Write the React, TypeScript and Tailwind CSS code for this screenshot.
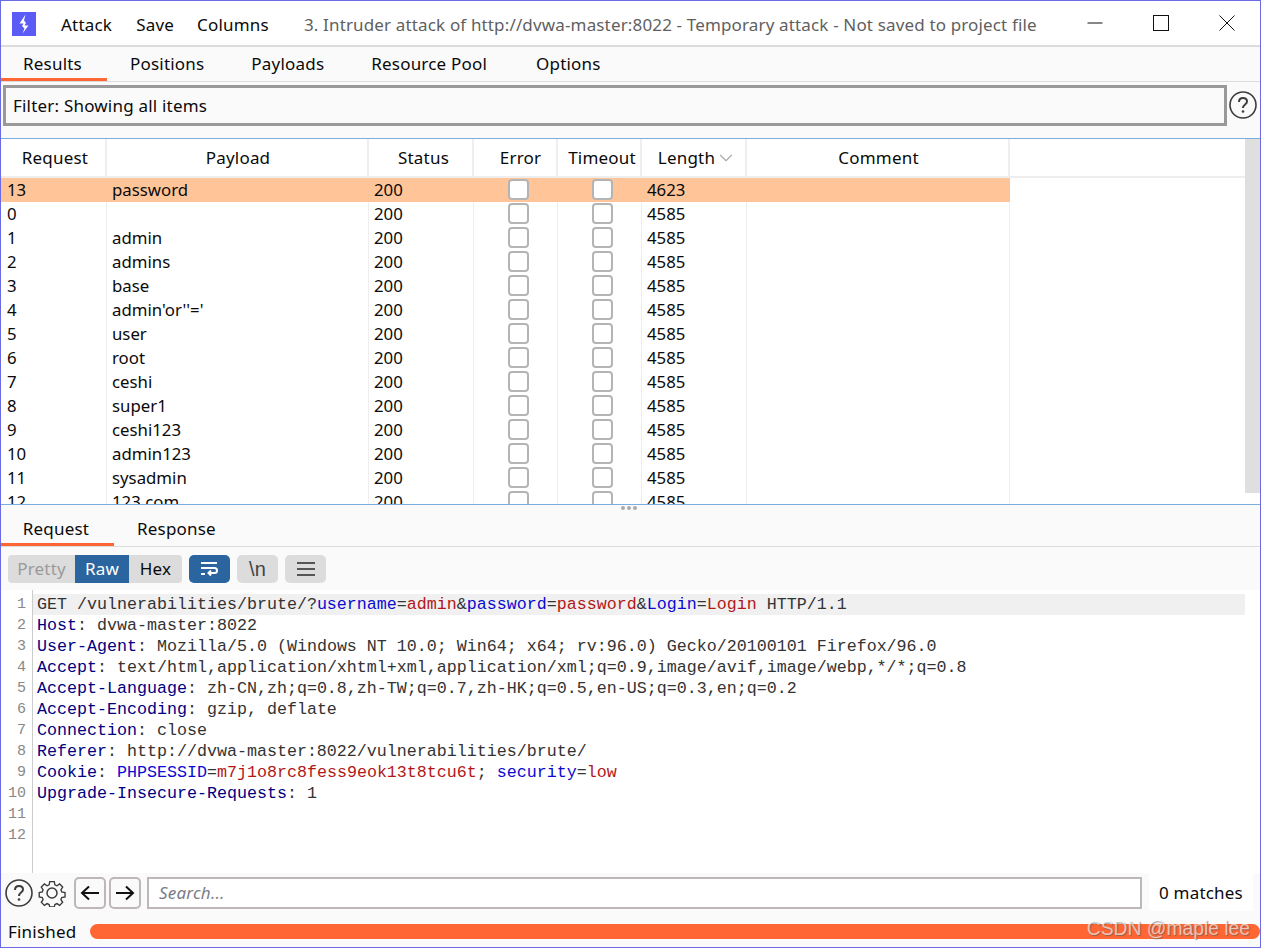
import { ChevronDown } from "lucide-react"

const rows = [
  ["13", "password", "4623"],
  ["0", "", "4585"],
  ["1", "admin", "4585"],
  ["2", "admins", "4585"],
  ["3", "base", "4585"],
  ["4", "admin'or''='", "4585"],
  ["5", "user", "4585"],
  ["6", "root", "4585"],
  ["7", "ceshi", "4585"],
  ["8", "super1", "4585"],
  ["9", "ceshi123", "4585"],
  ["10", "admin123", "4585"],
  ["11", "sysadmin", "4585"],
  ["12", "123.com", "4585"],
]

const Name = ({ children }: { children: string }) => <span className="text-[#000080]">{children}</span>
const Param = ({ children }: { children: string }) => <span className="text-[#0a0ad0]">{children}</span>
const Val = ({ children }: { children: string }) => <span className="text-[#b01818]">{children}</span>

const codeLines = [
  <>
    GET /vulnerabilities/brute/?<Param>username</Param>=<Val>admin</Val>&amp;<Param>password</Param>=<Val>password</Val>&amp;<Param>Login</Param>=<Val>Login</Val> HTTP/1.1
  </>,
  <><Name>Host</Name>: dvwa-master:8022</>,
  <><Name>User-Agent</Name>: Mozilla/5.0 (Windows NT 10.0; Win64; x64; rv:96.0) Gecko/20100101 Firefox/96.0</>,
  <><Name>Accept</Name>: text/html,application/xhtml+xml,application/xml;q=0.9,image/avif,image/webp,*/*;q=0.8</>,
  <><Name>Accept-Language</Name>: zh-CN,zh;q=0.8,zh-TW;q=0.7,zh-HK;q=0.5,en-US;q=0.3,en;q=0.2</>,
  <><Name>Accept-Encoding</Name>: gzip, deflate</>,
  <><Name>Connection</Name>: close</>,
  <><Name>Referer</Name>: http://dvwa-master:8022/vulnerabilities/brute/</>,
  <><Name>Cookie</Name>: <Param>PHPSESSID</Param>=<Val>m7j1o8rc8fess9eok13t8tcu6t</Val>; <Param>security</Param>=<Val>low</Val></>,
  <><Name>Upgrade-Insecure-Requests</Name>: 1</>,
  <></>,
  <></>,
]

function HelpIcon() {
  return (
    <svg width="28" height="28" viewBox="0 0 28 28" fill="none" stroke="#3c3c3c">
      <circle cx="14" cy="14" r="13" strokeWidth="1.6" />
      <path d="M10 11c0-2.6 1.8-4 4-4s4 1.400 4 3.600c0 3-4 3-4 6.400" strokeWidth="2" />
      <circle cx="14" cy="20.500" r="1.300" fill="#3c3c3c" stroke="none" />
    </svg>
  )
}

function GearIcon() {
  return (
    <svg width="28" height="28" viewBox="0 0 28 28" fill="none" stroke="#3c3c3c" strokeWidth="1.500">
      <path d="M11.500 1.500h5l.7 3.600 2.300 1 3-2 3.400 3.500-2 3 .9 2.300 3.700.7v4.800l-3.700.7-.9 2.300 2 3-3.400 3.500-3-2-2.300 1-.7 2.800h-5l-.7-2.800-2.300-1-3 2-3.400-3.500 2-3-.9-2.300-3.400-.7v-4.800l3.400-.7.9-2.300-2-3 3.400-3.500 3 2 2.300-1z" transform="translate(1.400 1.300) scale(.9)" />
      <circle cx="14" cy="14" r="5" />
    </svg>
  )
}

function NavArrow({ flip }: { flip?: boolean }) {
  return (
    <svg width="20" height="16" viewBox="0 0 20 16" fill="none" stroke="#111" strokeWidth="2" className={flip ? "rotate-180" : ""}>
      <path d="M19 8H2M9 1.500 2 8l7 6.500" />
    </svg>
  )
}

function Check() {
  return <div className="w-[21px] h-[21px] mb-[2px] rounded-[4px] border-2 border-[#b4b4b4] bg-white" />
}

export default function App() {
  return (
    <div className="relative w-[1261px] h-[948px] flex flex-col overflow-hidden bg-[#fafafa] border border-[#6a6ae4] text-[#0a0a0a] font-['Noto_Sans','Open_Sans',sans-serif] text-[17px] tracking-[0.2px]">
      {/* title bar */}
      <div className="h-[46px] shrink-0 flex items-center bg-white border-b-2 border-[#dcdcdc]">
        <div className="ml-[11px] mt-[2px] w-6 h-6 bg-[#5b5bf6] flex items-center justify-center">
          <svg width="12" height="20" viewBox="0 0 12 20" fill="white">
            <path d="M7.500 0.500 1.500 9.500h4l-1.500 2.500 2.500 2.500-2 5 6-8h-4l1.500-2.500-2-2.500z" />
          </svg>
        </div>
        <span className="ml-[25px] pt-[3px]">Attack</span>
        <span className="ml-[24px] pt-[3px]">Save</span>
        <span className="ml-[23px] pt-[3px]">Columns</span>
        <span className="ml-[35px] pt-[3px] text-[#5f5f5f] tracking-[0.15px] whitespace-nowrap">3. Intruder attack of http://dvwa-master:8022 - Temporary attack - Not saved to project file</span>
        <div className="ml-auto flex items-center gap-[50px] mr-[25px]">
          <svg width="16" height="16" viewBox="0 0 16 16" stroke="#111" strokeWidth="1"><path d="M0.500 8h15" /></svg>
          <svg width="16" height="16" viewBox="0 0 16 16" fill="none" stroke="#111" strokeWidth="1"><rect x="0.500" y="0.500" width="15" height="15" /></svg>
          <svg width="16" height="16" viewBox="0 0 16 16" fill="none" stroke="#111" strokeWidth="1"><path d="M0.500 0.500l15 15M15.500 0.500l-15 15" /></svg>
        </div>
      </div>

      {/* main tabs */}
      <div className="h-[35px] shrink-0 flex items-center border-b border-[#dcdcdc]">
        <div className="w-[106px] h-full flex items-center justify-center border-b-[3px] border-[#ff6633] pt-[3px] pr-[3px]">Results</div>
        <span className="ml-[23px]">Positions</span>
        <span className="ml-[47px]">Payloads</span>
        <span className="ml-[47px]">Resource Pool</span>
        <span className="ml-[49px]">Options</span>
      </div>

      {/* filter */}
      <div className="h-[56px] shrink-0 flex items-start pt-[3px] pl-[2px]">
        <div className="w-[1224px] h-[41px] flex items-center pl-[7px] pt-[1px] border-[3px] border-[#999999]">Filter: Showing all items</div>
        <div className="ml-[2px] mt-[6px]"><HelpIcon /></div>
      </div>

      {/* results table */}
      <div className="h-[367px] shrink-0 flex bg-white border-y border-[#7aaee0] overflow-hidden">
        <div className="w-[1244px] flex flex-col">
          <div className="h-[39px] shrink-0 flex border-b-2 border-[#eeeeee] text-center">
            <div className="w-[106px] pt-[1px] pl-[4px] flex items-center justify-center border-r-2 border-[#eeeeee]">Request</div>
            <div className="w-[262px] pt-[1px] pl-[2px] flex items-center justify-center border-r-2 border-[#eeeeee]">Payload</div>
            <div className="w-[105px] pt-[1px] pl-[6px] flex items-center justify-center border-r-2 border-[#eeeeee]">Status</div>
            <div className="w-[84px] pt-[1px] pl-[11px] flex items-center justify-center border-r-2 border-[#eeeeee]">Error</div>
            <div className="w-[84px] pt-[1px] pl-[6px] flex items-center justify-center border-r-2 border-[#eeeeee]">Timeout</div>
            <div className="w-[105px] pt-[1px] pl-[8px] flex items-center justify-center border-r-2 border-[#eeeeee]">Length<ChevronDown size={22} strokeWidth={1.2} color="#aaaaaa" /></div>
            <div className="w-[263px] pt-[1px] pl-[2px] flex items-center justify-center border-r-2 border-[#eeeeee]">Comment</div>
          </div>
          {rows.map((r, i) => (
            <div key={r[0]} className={`h-6 shrink-0 w-[1009px] flex items-center text-[16.8px] tracking-normal ${i === 0 ? "bg-[#ffc599]" : ""}`}>
              <div className={`w-[106px] h-full flex items-center pl-[6px] ${i === 0 ? "" : "border-r border-[#eeeeee]"}`}>{r[0]}</div>
              <div className={`w-[262px] h-full flex items-center pl-[5px] ${i === 0 ? "" : "border-r border-[#eeeeee]"}`}>{r[1]}</div>
              <div className={`w-[105px] h-full flex items-center pl-[5px] ${i === 0 ? "" : "border-r border-[#eeeeee]"}`}>200</div>
              <div className={`w-[84px] h-full flex items-center justify-center pl-[5px] ${i === 0 ? "" : "border-r border-[#eeeeee]"}`}><Check /></div>
              <div className={`w-[84px] h-full flex items-center justify-center pl-[5px] ${i === 0 ? "" : "border-r border-[#eeeeee]"}`}><Check /></div>
              <div className={`w-[105px] h-full flex items-center pl-[5px] ${i === 0 ? "" : "border-r border-[#eeeeee]"}`}>{r[2]}</div>
              <div className={`w-[263px] h-full ${i === 0 ? "" : "border-r border-[#eeeeee]"}`} />
            </div>
          ))}
        </div>
        <div className="w-[15px] bg-white">
          <div className="h-[354px] bg-[#dfdfdf]" />
        </div>
      </div>

      {/* request / response */}
      <div className="relative h-[42px] shrink-0 flex items-center border-b border-[#dcdcdc]">
        <div className="absolute left-[620px] top-[1px] flex gap-[2px]">
          <div className="w-[4px] h-[4px] rounded-full bg-[#aaaaaa]" />
          <div className="w-[4px] h-[4px] rounded-full bg-[#aaaaaa]" />
          <div className="w-[4px] h-[4px] rounded-full bg-[#aaaaaa]" />
        </div>
        <div className="w-[113px] h-full flex items-center justify-center border-b-[3px] border-[#ff6633] pt-[10px] pr-[3px]">Request</div>
        <span className="ml-[23px] pt-[6px]">Response</span>
      </div>

      {/* view buttons */}
      <div className="h-[43px] shrink-0 flex items-center pl-[7px] pt-[1px]">
        <div className="flex h-7 rounded-[4px] overflow-hidden bg-[#dcdcdc]">
          <div className="w-[67px] flex items-center justify-center text-[#9a9a9a]">Pretty</div>
          <div className="w-[54px] flex items-center justify-center bg-[#2a659f] text-white">Raw</div>
          <div className="w-[53px] flex items-center justify-center">Hex</div>
        </div>
        <div className="ml-[7px] w-[41px] h-7 rounded-[5px] bg-[#2a659f] flex items-center justify-center">
          <svg width="20" height="16" viewBox="0 0 20 16" fill="none" stroke="white" strokeWidth="2">
            <path d="M1 2h16M1 7h13.500a2.500 2.500 0 0 1 0 5H9M11 9.500 8.500 12l2.500 2.500M1 13h4" />
          </svg>
        </div>
        <div className="ml-[7px] w-[41px] h-7 rounded-[5px] bg-[#dcdcdc] flex items-center justify-center font-['Liberation_Sans',sans-serif] text-[20px] text-[#444]">\n</div>
        <div className="ml-[7px] w-[41px] h-7 rounded-[5px] bg-[#dcdcdc] flex items-center justify-center">
          <svg width="18" height="16" viewBox="0 0 18 16" stroke="#555" strokeWidth="2"><path d="M0 2h18M0 8h18M0 14h18" /></svg>
        </div>
      </div>

      {/* message editor */}
      <div className="flex-1 min-h-0 flex bg-white pt-[4px] font-['Liberation_Mono',monospace] text-[16.67px] tracking-normal leading-[21px] text-[#333]">
        <div className="w-[32px] shrink-0 -mt-[4px] pt-[4px] border-r border-[#cccccc] text-right pr-[6px] text-[#888]">
          {codeLines.map((_, i) => <div key={i} className="h-[21px] text-[15px]">{i + 1}</div>)}
        </div>
        <div className="w-[1212px] shrink-0">
          {codeLines.map((line, i) => (
            <div key={i} className={`h-[21px] pl-[4px] whitespace-pre ${i === 0 ? "bg-[#f0f0f0]" : ""}`}>{line}</div>
          ))}
        </div>
      </div>

      {/* search bar */}
      <div className="h-[38px] shrink-0 flex items-center pl-[4px] bg-[#fafafa]">
        <div className="pt-[2px]"><HelpIcon /></div>
        <div className="ml-[5px] pt-[2px]"><GearIcon /></div>
        <div className="ml-[8px] mt-[2px] w-8 h-8 rounded-[5px] border-2 border-[#bdb7b7] flex items-center justify-center"><NavArrow /></div>
        <div className="ml-[3px] mt-[2px] w-8 h-8 rounded-[5px] border-2 border-[#bdb7b7] flex items-center justify-center"><NavArrow flip /></div>
        <div className="ml-[6px] mt-[2px] w-[995px] h-8 flex items-center pl-[10px] bg-white border-2 border-[#bdb7b7] italic text-[#7c7c88]">Search...</div>
        <div className="ml-[7px] w-[104px] h-[38px] pt-[2px] flex items-center justify-center bg-white">0 matches</div>
      </div>

      {/* status bar */}
      <div className="h-[36px] shrink-0 flex items-center pl-[7px] pt-[5px]">
        <span className="w-[82px]">Finished</span>
        <div className="w-[1170px] h-[15px] rounded-full bg-[#ff6633]" />
      </div>

      {/* watermark */}
      <div className="absolute right-[10px] bottom-[3px] font-['Liberation_Sans',sans-serif] tracking-normal text-[19.3px] text-[#ffffffa0] [text-shadow:1px_1px_1px_#55555599]">CSDN @maple lee</div>
    </div>
  )
}
